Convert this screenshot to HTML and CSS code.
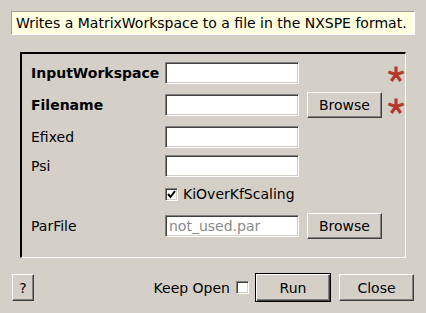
FILE: index.html
```html
<!DOCTYPE html>
<html lang="en">
    <head>
        <meta charset="UTF-8" />
        <title>SaveNXSPE</title>
        <link rel="stylesheet" href="styles.css">
    </head>
    <body>
        <div class="description">Writes a MatrixWorkspace to a file in the NXSPE format.</div>

        <div class="group">
            <div class="form-grid">
                <!-- row 1 -->
                <label class="label bold" for="inputWs">InputWorkspace</label>
                <input class="field" type="text" id="inputWs" />
                <span></span>
                <svg class="required" viewBox="0 0 16 26"><use href="#star" /></svg>

                <!-- row 2 -->
                <label class="label bold" for="filename">Filename</label>
                <input class="field" type="text" id="filename" />
                <button class="btn">Browse</button>
                <svg class="required" viewBox="0 0 16 26"><use href="#star" /></svg>

                <!-- row 3 -->
                <label class="label" for="efixed">Efixed</label>
                <input class="field" type="text" id="efixed" />
                <span></span>
                <span></span>

                <!-- row 4 -->
                <label class="label" for="psi">Psi</label>
                <input class="field" type="text" id="psi" />
                <span></span>
                <span></span>

                <!-- row 5 -->
                <span></span>
                <label class="check-row">
                    <span class="checkbox checked">
                        <svg viewBox="0 0 11 11"><polyline points="2,5 4.5,8 9,2" /></svg>
                    </span>
                    KiOverKfScaling
                </label>
                <span></span>
                <span></span>

                <!-- row 6 -->
                <label class="label" for="parfile">ParFile</label>
                <input class="field" type="text" id="parfile" placeholder="not_used.par" />
                <button class="btn">Browse</button>
                <span></span>
            </div>
        </div>

        <div class="bottom-bar">
            <button class="btn help">?</button>
            <span class="keep-open">Keep Open</span>
            <span class="checkbox"></span>
            <button class="btn run">Run</button>
            <button class="btn close">Close</button>
        </div>

        <svg width="0" height="0" style="position:absolute">
            <defs>
                <g id="star" stroke="#b5382b" stroke-width="3.2" stroke-linecap="butt">
                    <line x1="8" y1="14.5" x2="8" y2="6.5" />
                    <line x1="8" y1="14.5" x2="15.6" y2="12" />
                    <line x1="8" y1="14.5" x2="0.4" y2="12" />
                    <line x1="8" y1="14.5" x2="12.7" y2="21" />
                    <line x1="8" y1="14.5" x2="3.3" y2="21" />
                </g>
            </defs>
        </svg>
    </body>
</html>
```

FILE: styles.css
```css
* {
    box-sizing: border-box;
}
body {
    margin: 0;
    background-color: #d4d0c8;
    font-family: "DejaVu Sans", "Liberation Sans", sans-serif;
    font-size: 14px;
    color: #000;
}
.description {
    margin: 11px 11px 0 11px;
    height: 24px;
    padding: 0 4px;
    line-height: 22px;
    background-color: #ffffe1;
    border: 1px solid;
    border-color: #a0a0a0 #ffffff #ffffff #a0a0a0;
    white-space: nowrap;
}
.group {
    margin: 17px 0 0 20px;
    width: 386px;
    height: 206px;
    padding: 6px 0 0 9px;
    border-style: solid;
    border-width: 2px 1px 1px 2px;
    border-color: #000 #fff #fff #000;
}
.form-grid {
    display: grid;
    grid-template-columns: 134px 142px 81px 16px;
    grid-template-rows: 32px 32px 29px 28px 32px 26px;
    align-items: start;
}
.label {
    line-height: 26px;
    white-space: nowrap;
}
.bold {
    font-weight: bold;
}
.field {
    width: 134px;
    height: 22px;
    margin: 2px 0 0 0;
    padding: 0 3px;
    font: inherit;
    background: #fff;
    border: 1px solid;
    border-color: #808080 #fff #fff #808080;
    box-shadow: inset 1px 1px 0 #404040, inset -1px -1px 0 #d4d0c8;
    outline: none;
}
.field::placeholder {
    color: #8a8a8a;
}
.required {
    width: 16px;
    height: 26px;
}
.btn {
    height: 26px;
    width: 75px;
    padding: 0;
    font: inherit;
    color: #000;
    background-color: #d4d0c8;
    border: 1px solid;
    border-color: #fff #404040 #404040 #fff;
    box-shadow: inset -1px -1px 0 #808080;
}
.check-row {
    display: flex;
    align-items: center;
    gap: 5px;
    height: 26px;
    white-space: nowrap;
}
.checkbox {
    display: inline-block;
    width: 13px;
    height: 13px;
    background: #fff;
    border: 1px solid;
    border-color: #808080 #fff #fff #808080;
    box-shadow: inset 1px 1px 0 #404040, inset -1px -1px 0 #d4d0c8;
}
.checkbox svg {
    display: block;
    width: 11px;
    height: 11px;
    fill: none;
    stroke: #000;
    stroke-width: 2;
}
.bottom-bar {
    display: flex;
    align-items: center;
    margin: 15px 12px 0 12px;
    height: 29px;
}
.help {
    width: 22px;
    height: 27px;
}
.keep-open {
    margin-left: auto;
    margin-right: 6px;
}
.run {
    margin-left: 6px;
    width: 76px;
    height: 29px;
    border: 1px solid #000;
    box-shadow: inset 1px 1px 0 #fff, inset -1px -1px 0 #404040, inset -2px -2px 0 #808080;
}
.close {
    margin-left: 8px;
    height: 27px;
}
```
